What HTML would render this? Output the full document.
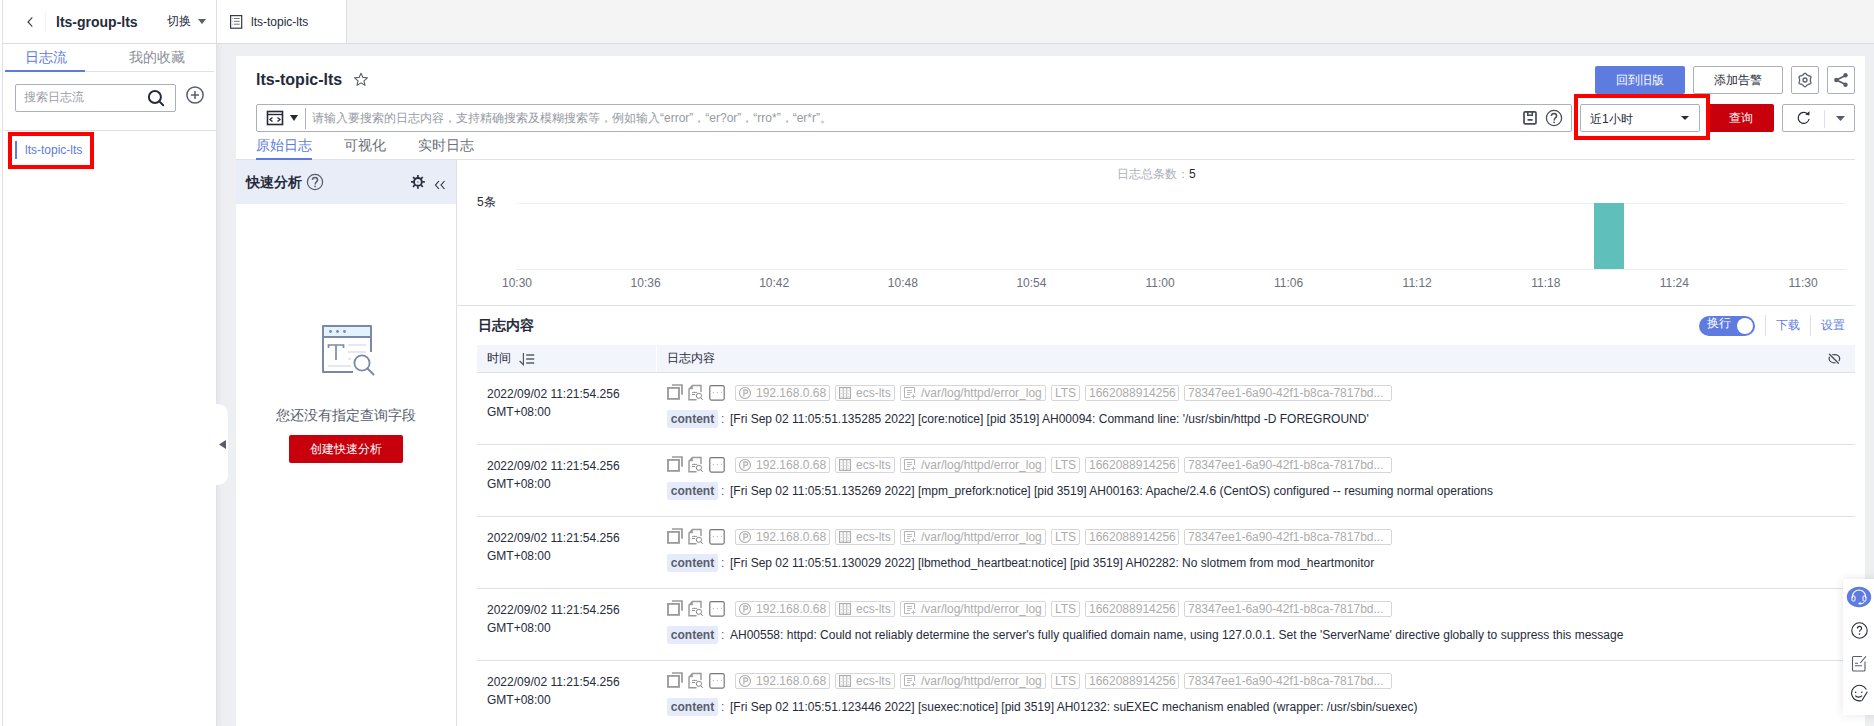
<!DOCTYPE html>
<html><head><meta charset="utf-8">
<style>
*{box-sizing:border-box;margin:0;padding:0}
html,body{width:1874px;height:726px;overflow:hidden;background:#fff;font-family:"Liberation Sans",sans-serif;color:#252b3a;font-size:12px}
.a{position:absolute}
.t{white-space:nowrap;line-height:1}
svg{display:block;overflow:visible}
.tag{height:16px;border:1px solid #d6d6d6;border-radius:2px;padding:0 3px;font-size:12px;line-height:14px;color:#acacac;white-space:nowrap;overflow:hidden}
</style></head><body>
<!-- top header -->
<div class="a" style="left:0;top:0;width:1874px;height:726px;background:#fff"></div>
<div class="a" style="left:346px;top:0;width:1528px;height:43px;background:#f4f4f4"></div>
<div class="a" style="left:2px;top:0;width:1px;height:726px;background:#dfe1e6"></div>
<div class="a" style="left:3px;top:43px;width:1871px;height:1px;background:#dcdde3"></div>
<div class="a" style="left:216px;top:0;width:1px;height:43px;background:#dcdde3"></div>
<div class="a" style="left:346px;top:0;width:1px;height:43px;background:#dcdde3"></div>
<div class="a" style="left:45px;top:11px;width:1px;height:21px;background:#f3f3f5"></div>
<!-- back chevron -->
<svg class="a" style="left:27px;top:16px" width="8" height="12" viewBox="0 0 8 12"><path d="M5.3 1.3 L1 6 L5.3 10.7" fill="none" stroke="#3a3f4c" stroke-width="1.15"/></svg>
<div class="a t" style="left:56px;top:15px;font-size:14px;font-weight:bold;color:#252b3a">lts-group-lts</div>
<div class="a t" style="left:167px;top:15px;font-size:12px;color:#252b3a">切换</div>
<svg class="a" style="left:198px;top:19px" width="8" height="5"><path d="M0 0H8L4 5Z" fill="#575d6c"/></svg>
<!-- tab -->
<svg class="a" style="left:228px;top:13px" width="16" height="18" viewBox="228 13 16 18"><rect x="230.6" y="15.6" width="11.1" height="12.6" fill="none" stroke="#353a47" stroke-width="1.2"/><path d="M234 18.5H239.7M234 21.3H239.7M234 24.2H239.7" stroke="#70757f" stroke-width="1"/><path d="M232.3 18.5H233.2M232.3 21.3H233.2M232.3 24.2H233.2" stroke="#a0a4ad" stroke-width="1"/></svg>
<div class="a t" style="left:251px;top:16px;font-size:12px;color:#252b3a">lts-topic-lts</div>

<!-- main grey bg -->
<div class="a" style="left:216px;top:44px;width:1658px;height:682px;background:#eeeff3"></div>
<div class="a" style="left:216px;top:44px;width:8px;height:682px;background:linear-gradient(to right,#dfe0e5,#e8e9ee 2px,#eeeff3 7px)"></div>

<!-- left sidebar -->
<div class="a t" style="left:25px;top:50px;font-size:14px;color:#5e7ce0">日志流</div>
<div class="a t" style="left:129px;top:50px;font-size:14px;color:#8a8e99">我的收藏</div>
<div class="a" style="left:5px;top:71px;width:209px;height:1px;background:#dfe1e6"></div>
<div class="a" style="left:5px;top:70px;width:80px;height:2px;background:#5e7ce0"></div>
<div class="a" style="left:15px;top:84px;width:161px;height:28px;border:1px solid #adb0b8;border-radius:2px"></div>
<div class="a t" style="left:24px;top:91px;font-size:12px;color:#9a9ea7">搜索日志流</div>
<svg class="a" style="left:146px;top:89px" width="20" height="20" viewBox="0 0 20 20"><circle cx="8.9" cy="8" r="6" fill="none" stroke="#252b3a" stroke-width="2"/><path d="M13.3 12.4L17.2 16.3" stroke="#252b3a" stroke-width="2" stroke-linecap="round"/></svg>
<svg class="a" style="left:186px;top:86px" width="18" height="18" viewBox="0 0 18 18"><circle cx="9" cy="9" r="8.1" fill="none" stroke="#575d6c" stroke-width="1.5"/><path d="M9 5V13M5 9H13" stroke="#575d6c" stroke-width="1.5"/></svg>
<div class="a" style="left:5px;top:130px;width:211px;height:1px;background:#dfe1e6"></div>
<div class="a" style="left:15px;top:141px;width:2px;height:18px;background:#5e7ce0"></div>
<div class="a t" style="left:25px;top:144px;font-size:12px;color:#5e7ce0">lts-topic-lts</div>
<div class="a" style="left:8px;top:132px;width:86px;height:37px;border:4px solid #ff0000"></div>

<!-- card -->
<div class="a" style="left:236px;top:56px;width:1629px;height:670px;background:#fff"></div>
<div class="a t" style="left:256px;top:72px;font-size:16px;font-weight:bold;color:#252b3a">lts-topic-lts</div>
<svg class="a" style="left:353px;top:72px" width="16" height="15" viewBox="0 0 16 15"><path d="M8 1.2L9.9 5.4L14.4 5.8L11 8.8L12 13.3L8 10.9L4 13.3L5 8.8L1.6 5.8L6.1 5.4Z" fill="none" stroke="#575d6c" stroke-width="1.1" stroke-linejoin="round"/></svg>
<!-- buttons -->
<div class="a t" style="left:1595px;top:66px;width:90px;height:28px;background:#5e7ce0;border-radius:2px;color:#fff;font-size:12px;line-height:28px;text-align:center">回到旧版</div>
<div class="a t" style="left:1693px;top:66px;width:90px;height:28px;border:1px solid #adb0b8;border-radius:2px;color:#252b3a;font-size:12px;line-height:26px;text-align:center">添加告警</div>
<div class="a" style="left:1791px;top:66px;width:28px;height:28px;border:1px solid #adb0b8;border-radius:2px"></div>
<svg class="a" style="left:1795px;top:70px" width="20" height="20" viewBox="1795 70 20 20"><path d="M1810.50 80.00L1810.49 80.24L1810.48 80.48L1810.45 80.72L1810.42 80.96L1810.37 81.19L1810.51 81.48L1810.68 81.79L1810.83 82.12L1810.92 82.45L1810.95 82.77L1810.91 83.08L1810.80 83.35L1810.62 83.58L1810.38 83.77L1810.08 83.90L1809.75 83.99L1809.39 84.03L1809.03 84.03L1808.72 84.06L1808.54 84.21L1808.35 84.36L1808.15 84.51L1807.96 84.64L1807.75 84.76L1807.54 84.88L1807.32 84.98L1807.10 85.08L1806.88 85.17L1806.65 85.25L1806.48 85.51L1806.29 85.82L1806.08 86.11L1805.84 86.35L1805.57 86.54L1805.29 86.66L1805.00 86.70L1804.71 86.66L1804.43 86.54L1804.16 86.35L1803.92 86.11L1803.71 85.82L1803.52 85.51L1803.35 85.25L1803.12 85.17L1802.90 85.08L1802.68 84.98L1802.46 84.88L1802.25 84.76L1802.04 84.64L1801.85 84.51L1801.65 84.36L1801.46 84.21L1801.28 84.06L1800.97 84.03L1800.61 84.03L1800.25 83.99L1799.92 83.90L1799.62 83.77L1799.38 83.58L1799.20 83.35L1799.09 83.08L1799.05 82.77L1799.08 82.45L1799.17 82.12L1799.32 81.79L1799.49 81.48L1799.63 81.19L1799.58 80.96L1799.55 80.72L1799.52 80.48L1799.51 80.24L1799.50 80.00L1799.51 79.76L1799.52 79.52L1799.55 79.28L1799.58 79.04L1799.63 78.81L1799.49 78.52L1799.32 78.21L1799.17 77.88L1799.08 77.55L1799.05 77.23L1799.09 76.92L1799.20 76.65L1799.38 76.42L1799.62 76.23L1799.92 76.10L1800.25 76.01L1800.61 75.97L1800.97 75.97L1801.28 75.94L1801.46 75.79L1801.65 75.64L1801.85 75.49L1802.04 75.36L1802.25 75.24L1802.46 75.12L1802.68 75.02L1802.90 74.92L1803.12 74.83L1803.35 74.75L1803.52 74.49L1803.71 74.18L1803.92 73.89L1804.16 73.65L1804.43 73.46L1804.71 73.34L1805.00 73.30L1805.29 73.34L1805.57 73.46L1805.84 73.65L1806.08 73.89L1806.29 74.18L1806.48 74.49L1806.65 74.75L1806.88 74.83L1807.10 74.92L1807.32 75.02L1807.54 75.12L1807.75 75.24L1807.96 75.36L1808.15 75.49L1808.35 75.64L1808.54 75.79L1808.72 75.94L1809.03 75.97L1809.39 75.97L1809.75 76.01L1810.08 76.10L1810.38 76.23L1810.62 76.42L1810.80 76.65L1810.91 76.92L1810.95 77.23L1810.92 77.55L1810.83 77.88L1810.68 78.21L1810.51 78.52L1810.37 78.81L1810.42 79.04L1810.45 79.28L1810.48 79.52L1810.49 79.76Z" fill="none" stroke="#575d6c" stroke-width="1.3" stroke-linejoin="round"/><circle cx="1805" cy="80" r="2" fill="none" stroke="#575d6c" stroke-width="1.3"/></svg>
<div class="a" style="left:1827px;top:66px;width:28px;height:28px;border:1px solid #adb0b8;border-radius:2px"></div>
<svg class="a" style="left:1833px;top:72px" width="16" height="16" viewBox="0 0 16 16"><path d="M12.5 3.5L3.5 8L12.5 12.5" fill="none" stroke="#575d6c" stroke-width="1.8"/><circle cx="12.5" cy="3.3" r="2.2" fill="#575d6c"/><circle cx="3.3" cy="8" r="2.2" fill="#575d6c"/><circle cx="12.5" cy="12.7" r="2.2" fill="#575d6c"/></svg>
<!-- search bar -->
<div class="a" style="left:256px;top:104px;width:1316px;height:28px;border:1px solid #adb0b8;border-radius:2px"></div>
<svg class="a" style="left:266px;top:110px" width="18" height="16" viewBox="0 0 18 16"><rect x="1.5" y="1.5" width="15" height="13" fill="none" stroke="#252b3a" stroke-width="1.6"/><path d="M1.5 4.5H16.5" stroke="#252b3a" stroke-width="1.4"/><path d="M6.5 7.5L4 9.5L6.5 11.5M11.5 7.5L14 9.5L11.5 11.5" fill="none" stroke="#252b3a" stroke-width="1.3"/></svg>
<svg class="a" style="left:290px;top:115px" width="8" height="6"><path d="M0 0H8L4 6Z" fill="#252b3a"/></svg>
<div class="a" style="left:305px;top:108px;width:1px;height:21px;background:#adb0b8"></div>
<div class="a t" style="left:312px;top:112px;font-size:12px;color:#959aa3">请输入要搜索的日志内容，支持精确搜索及模糊搜索等，例如输入“error”，“er?or”，“rro*”，“er*r”。</div>
<svg class="a" style="left:1515px;top:105px" width="55" height="26" viewBox="1515 105 55 26"><rect x="1524" y="111.9" width="12" height="12" rx="1.2" fill="none" stroke="#454b59" stroke-width="1.7"/><path d="M1527.8 112V115.2H1532.3V112M1527.6 119.9H1532.6" fill="none" stroke="#454b59" stroke-width="1.6"/>
<circle cx="1554" cy="118" r="7.6" fill="none" stroke="#454b59" stroke-width="1.25"/><path d="M1551.3 115.9C1551.5 114.3 1552.6 113.6 1554 113.6C1555.5 113.6 1556.6 114.6 1556.6 115.9C1556.6 117.6 1554.2 118.2 1554.2 120.4" fill="none" stroke="#454b59" stroke-width="1.5"/><circle cx="1554.1" cy="122.3" r=".9" fill="#454b59"/></svg>
<!-- time select -->
<div class="a" style="left:1580px;top:104px;width:120px;height:28px;border:1px solid #adb0b8;border-radius:2px"></div>
<div class="a t" style="left:1590px;top:113px;font-size:12px;color:#252b3a">近1小时</div>
<svg class="a" style="left:1681px;top:116px" width="8" height="4"><path d="M0 0H8L4 4Z" fill="#252b3a"/></svg>
<div class="a" style="left:1708px;top:104px;width:66px;height:28px;background:#c7000b;border-radius:2px;color:#fff;font-size:12px;line-height:28px;text-align:center">查询</div>
<div class="a" style="left:1574px;top:94px;width:136px;height:46px;border:4px solid #ff0000"></div>
<div class="a" style="left:1782px;top:104px;width:73px;height:28px;border:1px solid #adb0b8;border-radius:2px"></div>
<svg class="a" style="left:1795px;top:109px" width="18" height="18" viewBox="1795 109 18 18"><path d="M1807.6 114A5.5 5.5 0 1 0 1809.1 119" fill="none" stroke="#252b3a" stroke-width="1.2"/><path d="M1809.6 111.3L1809.3 115.6L1805.2 114.6Z" fill="#252b3a"/></svg>
<div class="a" style="left:1824px;top:110px;width:1px;height:18px;background:#dfe1e6"></div>
<svg class="a" style="left:1836px;top:116px" width="9" height="5"><path d="M0 0H9L4.5 5Z" fill="#575d6c"/></svg>
<!-- tabs -->
<div class="a t" style="left:256px;top:138px;font-size:14px;color:#5e7ce0">原始日志</div>
<div class="a t" style="left:344px;top:138px;font-size:14px;color:#6c707a">可视化</div>
<div class="a t" style="left:418px;top:138px;font-size:14px;color:#6c707a">实时日志</div>
<div class="a" style="left:236px;top:159px;width:1619px;height:1px;background:#dfe1e6"></div>
<div class="a" style="left:256px;top:158px;width:56px;height:2px;background:#5e7ce0"></div>
<!-- quick analysis -->
<div class="a" style="left:236px;top:160px;width:220px;height:44px;background:#e9edf8"></div>
<div class="a" style="left:456px;top:160px;width:1px;height:566px;background:#dfe1e6"></div>
<div class="a t" style="left:246px;top:175px;font-size:14px;font-weight:bold;color:#252b3a">快速分析</div>
<svg class="a" style="left:305px;top:172px" width="20" height="20" viewBox="305 172 20 20"><circle cx="315" cy="182" r="7.6" fill="none" stroke="#575d6c" stroke-width="1.25"/><path d="M312.3 179.9C312.5 178.3 313.6 177.6 315 177.6C316.5 177.6 317.6 178.6 317.6 179.9C317.6 181.6 315.2 182.2 315.2 184.4" fill="none" stroke="#575d6c" stroke-width="1.5"/><circle cx="315.1" cy="186.3" r=".9" fill="#575d6c"/></svg>
<svg class="a" style="left:408px;top:172px" width="20" height="20" viewBox="408 172 20 20"><circle cx="417.9" cy="181.9" r="3.9" fill="none" stroke="#252b3a" stroke-width="1.9"/><path d="M417.90 177.30L417.90 175.00M421.15 178.65L422.78 177.02M422.50 181.90L424.80 181.90M421.15 185.15L422.78 186.78M417.90 186.50L417.90 188.80M414.65 185.15L413.02 186.78M413.30 181.90L411.00 181.90M414.65 178.65L413.02 177.02" stroke="#252b3a" stroke-width="1.7"/><circle cx="417.9" cy="181.9" r=".7" fill="#575d6c"/></svg>
<svg class="a" style="left:434px;top:180px" width="12" height="10" viewBox="0 0 12 10"><path d="M5 1L1.5 5L5 9M10.5 1L7 5L10.5 9" fill="none" stroke="#252b3a" stroke-width="1.1"/></svg>
<!-- empty illustration -->
<svg class="a" style="left:318px;top:320px" width="60" height="60" viewBox="318 320 60 60">
<rect x="323" y="326" width="48" height="11" fill="#e3f2fd"/>
<path d="M353 372H323V326H371V352" fill="none" stroke="#7a8aa6" stroke-width="2" stroke-linejoin="round"/>
<path d="M323 337H371" stroke="#7a8aa6" stroke-width="1.8"/>
<circle cx="330.5" cy="331.5" r="1.4" fill="#7a8aa6"/><circle cx="337.5" cy="331.5" r="1.4" fill="#7a8aa6"/><circle cx="344.5" cy="331.5" r="1.4" fill="#7a8aa6"/>
<path d="M328.5 348V345H343.5V348M336 345V360" fill="none" stroke="#7a8aa6" stroke-width="1.7"/>
<path d="M348 345H366M348 352H366M348 359H351M328 366H351" stroke="#dfe1e6" stroke-width="1.6"/>
<circle cx="362" cy="363" r="7.6" fill="#fff" stroke="#7a8aa6" stroke-width="1.8"/>
<path d="M367.5 368.5L373.5 374.5" stroke="#7a8aa6" stroke-width="2" stroke-linecap="round"/>
</svg>
<div class="a t" style="left:276px;top:408px;font-size:14px;color:#575d6c">您还没有指定查询字段</div>
<div class="a t" style="left:289px;top:435px;width:114px;height:28px;background:#c7000b;border-radius:2px;color:#fff;font-size:12px;line-height:28px;text-align:center">创建快速分析</div>
<!-- collapse handle -->
<div class="a" style="left:216px;top:404px;width:12px;height:81px;background:#fff;border-radius:0 10px 10px 0"></div>
<svg class="a" style="left:219px;top:440px" width="7" height="9"><path d="M7 0V9L0 4.5Z" fill="#575d6c"/></svg>
<!-- chart -->
<div class="a t" style="left:1117px;top:168px;font-size:12px;color:#adb0b8">日志总条数：<span style="color:#252b3a">5</span></div>
<div class="a t" style="left:477px;top:196px;font-size:12px;color:#252b3a">5条</div>
<div class="a" style="left:516px;top:203px;width:1330px;height:1px;background:#f0f0f0"></div>
<div class="a" style="left:516px;top:269px;width:1330px;height:1px;background:#ededed"></div>
<div class="a" style="left:1594px;top:203px;width:30px;height:66px;background:#5ebfbb"></div>
<div class="a t" style="left:477.0px;top:277px;width:80px;text-align:center;font-size:12px;color:#6c707a">10:30</div>
<div class="a t" style="left:605.6px;top:277px;width:80px;text-align:center;font-size:12px;color:#6c707a">10:36</div>
<div class="a t" style="left:734.2px;top:277px;width:80px;text-align:center;font-size:12px;color:#6c707a">10:42</div>
<div class="a t" style="left:862.8px;top:277px;width:80px;text-align:center;font-size:12px;color:#6c707a">10:48</div>
<div class="a t" style="left:991.4px;top:277px;width:80px;text-align:center;font-size:12px;color:#6c707a">10:54</div>
<div class="a t" style="left:1120.0px;top:277px;width:80px;text-align:center;font-size:12px;color:#6c707a">11:00</div>
<div class="a t" style="left:1248.6px;top:277px;width:80px;text-align:center;font-size:12px;color:#6c707a">11:06</div>
<div class="a t" style="left:1377.2px;top:277px;width:80px;text-align:center;font-size:12px;color:#6c707a">11:12</div>
<div class="a t" style="left:1505.8px;top:277px;width:80px;text-align:center;font-size:12px;color:#6c707a">11:18</div>
<div class="a t" style="left:1634.4px;top:277px;width:80px;text-align:center;font-size:12px;color:#6c707a">11:24</div>
<div class="a t" style="left:1763.0px;top:277px;width:80px;text-align:center;font-size:12px;color:#6c707a">11:30</div>

<div class="a" style="left:457px;top:305px;width:1398px;height:1px;background:#dfe1e6"></div>
<!-- log content -->
<div class="a t" style="left:478px;top:318px;font-size:14px;font-weight:bold;color:#252b3a">日志内容</div>
<div class="a" style="left:1699px;top:316px;width:56px;height:20px;background:#5e7ce0;border-radius:10px"></div>
<div class="a t" style="left:1707px;top:317px;font-size:12px;color:#fff">换行</div>
<div class="a" style="left:1737px;top:318px;width:16px;height:16px;background:#fff;border-radius:50%"></div>
<div class="a" style="left:1765px;top:315px;width:1px;height:21px;background:#dfe1e6"></div>
<div class="a t" style="left:1776px;top:319px;font-size:12px;color:#5e7ce0">下载</div>
<div class="a" style="left:1810px;top:315px;width:1px;height:21px;background:#dfe1e6"></div>
<div class="a t" style="left:1821px;top:319px;font-size:12px;color:#5e7ce0">设置</div>
<div class="a" style="left:477px;top:345px;width:1378px;height:27px;background:#f2f5fc"></div>
<div class="a" style="left:656px;top:345px;width:1px;height:27px;background:#fff"></div>
<div class="a" style="left:477px;top:372px;width:1378px;height:1px;background:#dfe1e6"></div>
<div class="a t" style="left:487px;top:352px;font-size:12px;color:#252b3a">时间</div>
<svg class="a" style="left:516px;top:350px" width="22" height="18" viewBox="516 350 22 18"><path d="M523.4 353V364.6L519.6 361" fill="none" stroke="#454b59" stroke-width="1.1"/><path d="M526.2 355H534.2M526.2 359H534.2M526.2 363H534.2" stroke="#575d6c" stroke-width="1.4"/></svg>
<div class="a t" style="left:667px;top:352px;font-size:12px;color:#252b3a">日志内容</div>
<svg class="a" style="left:1825px;top:350px" width="20" height="18" viewBox="1825 350 20 18"><ellipse cx="1834.4" cy="358.7" rx="5.3" ry="4.1" fill="none" stroke="#454b59" stroke-width="1.3"/><path d="M1829.3 354.1L1838.6 363.4" stroke="#f2f5fc" stroke-width="3.2"/><path d="M1829.5 354.3L1838.4 363.2" stroke="#454b59" stroke-width="1.3" stroke-linecap="round"/></svg>
<div class="a t" style="left:487px;top:385px;font-size:12px;line-height:18px;color:#252b3a">2022/09/02 11:21:54.256<br>GMT+08:00</div>
<svg class="a" style="left:664px;top:380px" width="66" height="24" viewBox="664 380 66 24">
<rect x="668" y="387.9" width="11" height="11" fill="none" stroke="#999" stroke-width="1.8"/><path d="M672 385H682V394.8" fill="none" stroke="#999" stroke-width="1.7"/>
<path d="M696.5 399.8H689V389L692.5 385.5H701V392" fill="none" stroke="#999" stroke-width="1.4"/><path d="M689 389.3H692.8V385.5Z" fill="#999"/><path d="M692 392.4H697M692 394.5H695" stroke="#888" stroke-width=".9"/><circle cx="698.9" cy="395.8" r="2.6" fill="none" stroke="#888" stroke-width="1"/><path d="M700.7 397.7L702.8 400" stroke="#888" stroke-width="1"/>
<rect x="709.8" y="385.7" width="14.4" height="14.4" rx="1.5" fill="none" stroke="#777" stroke-width="1.2"/><path d="M712.8 392.4H714M716.8 392.4H718M720.8 392.4H722" stroke="#aaa" stroke-width=".8"/>
</svg>
<div class="a tag" style="left:735px;top:385px;width:95px"><svg width="12" height="12" viewBox="0 0 12 12" style="display:inline-block;vertical-align:-2px;margin-right:5px"><circle cx="6" cy="6" r="5.5" fill="none" stroke="#aaa" stroke-width="1.1"/><path d="M4.9 9.3V3H6.9C8.1 3 8.7 3.7 8.7 4.7S8.1 6.4 6.9 6.4H4.9" fill="none" stroke="#b5b5b5" stroke-width="1.3"/></svg>192.168.0.68</div>
<div class="a tag" style="left:835px;top:385px;width:60px"><svg width="12" height="12" viewBox="0 0 12 12" style="display:inline-block;vertical-align:-2px;margin-right:5px"><rect x=".6" y=".6" width="10.8" height="10.8" fill="none" stroke="#a8a8a8" stroke-width="1.1"/><path d="M4.2 .5V11.5M7.8 .5V11.5" stroke="#a8a8a8" stroke-width=".9"/><path d="M2.4 3V4.2M2.4 6V7.2M2.4 9V10M6 3V4.2M6 6V7.2M6 9V10M9.6 3V4.2M9.6 6V7.2M9.6 9V10" stroke="#c8c8c8" stroke-width=".8"/></svg>ecs-lts</div>
<div class="a tag" style="left:900px;top:385px;width:146px"><svg width="12" height="12" viewBox="0 0 12 12" style="display:inline-block;vertical-align:-2px;margin-right:5px"><path d="M6 10.5H.5V.5H10.5V6" fill="none" stroke="#b2b5bc"/><path d="M3 3.5H8M3 5.5H8M3 7.5H6M7.5 9.5H11.5M9.5 7.5V11.5" stroke="#b2b5bc" stroke-width=".9"/></svg>/var/log/httpd/error_log</div>
<div class="a tag" style="left:1051px;top:385px;width:29px">LTS</div>
<div class="a tag" style="left:1085px;top:385px;width:94px">1662088914256</div>
<div class="a tag" style="left:1184px;top:385px;width:208px">78347ee1-6a90-42f1-b8ca-7817bd...</div>
<div class="a t" style="left:667px;top:410px;width:51px;height:18px;background:#e6ebfb;border-radius:2px;font-size:12px;line-height:18px;font-weight:bold;color:#575d6c;text-align:center">content</div>
<div class="a t" style="left:721px;top:413px;font-size:12px;color:#575d6c">:</div>
<div class="a t" style="left:730px;top:413px;font-size:12px;color:#252b3a">[Fri Sep 02 11:05:51.135285 2022] [core:notice] [pid 3519] AH00094: Command line: &#39;/usr/sbin/httpd -D FOREGROUND&#39;</div>
<div class="a" style="left:477px;top:444px;width:1378px;height:1px;background:#dfe1e6"></div>
<div class="a t" style="left:487px;top:457px;font-size:12px;line-height:18px;color:#252b3a">2022/09/02 11:21:54.256<br>GMT+08:00</div>
<svg class="a" style="left:664px;top:452px" width="66" height="24" viewBox="664 380 66 24">
<rect x="668" y="387.9" width="11" height="11" fill="none" stroke="#999" stroke-width="1.8"/><path d="M672 385H682V394.8" fill="none" stroke="#999" stroke-width="1.7"/>
<path d="M696.5 399.8H689V389L692.5 385.5H701V392" fill="none" stroke="#999" stroke-width="1.4"/><path d="M689 389.3H692.8V385.5Z" fill="#999"/><path d="M692 392.4H697M692 394.5H695" stroke="#888" stroke-width=".9"/><circle cx="698.9" cy="395.8" r="2.6" fill="none" stroke="#888" stroke-width="1"/><path d="M700.7 397.7L702.8 400" stroke="#888" stroke-width="1"/>
<rect x="709.8" y="385.7" width="14.4" height="14.4" rx="1.5" fill="none" stroke="#777" stroke-width="1.2"/><path d="M712.8 392.4H714M716.8 392.4H718M720.8 392.4H722" stroke="#aaa" stroke-width=".8"/>
</svg>
<div class="a tag" style="left:735px;top:457px;width:95px"><svg width="12" height="12" viewBox="0 0 12 12" style="display:inline-block;vertical-align:-2px;margin-right:5px"><circle cx="6" cy="6" r="5.5" fill="none" stroke="#aaa" stroke-width="1.1"/><path d="M4.9 9.3V3H6.9C8.1 3 8.7 3.7 8.7 4.7S8.1 6.4 6.9 6.4H4.9" fill="none" stroke="#b5b5b5" stroke-width="1.3"/></svg>192.168.0.68</div>
<div class="a tag" style="left:835px;top:457px;width:60px"><svg width="12" height="12" viewBox="0 0 12 12" style="display:inline-block;vertical-align:-2px;margin-right:5px"><rect x=".6" y=".6" width="10.8" height="10.8" fill="none" stroke="#a8a8a8" stroke-width="1.1"/><path d="M4.2 .5V11.5M7.8 .5V11.5" stroke="#a8a8a8" stroke-width=".9"/><path d="M2.4 3V4.2M2.4 6V7.2M2.4 9V10M6 3V4.2M6 6V7.2M6 9V10M9.6 3V4.2M9.6 6V7.2M9.6 9V10" stroke="#c8c8c8" stroke-width=".8"/></svg>ecs-lts</div>
<div class="a tag" style="left:900px;top:457px;width:146px"><svg width="12" height="12" viewBox="0 0 12 12" style="display:inline-block;vertical-align:-2px;margin-right:5px"><path d="M6 10.5H.5V.5H10.5V6" fill="none" stroke="#b2b5bc"/><path d="M3 3.5H8M3 5.5H8M3 7.5H6M7.5 9.5H11.5M9.5 7.5V11.5" stroke="#b2b5bc" stroke-width=".9"/></svg>/var/log/httpd/error_log</div>
<div class="a tag" style="left:1051px;top:457px;width:29px">LTS</div>
<div class="a tag" style="left:1085px;top:457px;width:94px">1662088914256</div>
<div class="a tag" style="left:1184px;top:457px;width:208px">78347ee1-6a90-42f1-b8ca-7817bd...</div>
<div class="a t" style="left:667px;top:482px;width:51px;height:18px;background:#e6ebfb;border-radius:2px;font-size:12px;line-height:18px;font-weight:bold;color:#575d6c;text-align:center">content</div>
<div class="a t" style="left:721px;top:485px;font-size:12px;color:#575d6c">:</div>
<div class="a t" style="left:730px;top:485px;font-size:12px;color:#252b3a">[Fri Sep 02 11:05:51.135269 2022] [mpm_prefork:notice] [pid 3519] AH00163: Apache/2.4.6 (CentOS) configured -- resuming normal operations</div>
<div class="a" style="left:477px;top:516px;width:1378px;height:1px;background:#dfe1e6"></div>
<div class="a t" style="left:487px;top:529px;font-size:12px;line-height:18px;color:#252b3a">2022/09/02 11:21:54.256<br>GMT+08:00</div>
<svg class="a" style="left:664px;top:524px" width="66" height="24" viewBox="664 380 66 24">
<rect x="668" y="387.9" width="11" height="11" fill="none" stroke="#999" stroke-width="1.8"/><path d="M672 385H682V394.8" fill="none" stroke="#999" stroke-width="1.7"/>
<path d="M696.5 399.8H689V389L692.5 385.5H701V392" fill="none" stroke="#999" stroke-width="1.4"/><path d="M689 389.3H692.8V385.5Z" fill="#999"/><path d="M692 392.4H697M692 394.5H695" stroke="#888" stroke-width=".9"/><circle cx="698.9" cy="395.8" r="2.6" fill="none" stroke="#888" stroke-width="1"/><path d="M700.7 397.7L702.8 400" stroke="#888" stroke-width="1"/>
<rect x="709.8" y="385.7" width="14.4" height="14.4" rx="1.5" fill="none" stroke="#777" stroke-width="1.2"/><path d="M712.8 392.4H714M716.8 392.4H718M720.8 392.4H722" stroke="#aaa" stroke-width=".8"/>
</svg>
<div class="a tag" style="left:735px;top:529px;width:95px"><svg width="12" height="12" viewBox="0 0 12 12" style="display:inline-block;vertical-align:-2px;margin-right:5px"><circle cx="6" cy="6" r="5.5" fill="none" stroke="#aaa" stroke-width="1.1"/><path d="M4.9 9.3V3H6.9C8.1 3 8.7 3.7 8.7 4.7S8.1 6.4 6.9 6.4H4.9" fill="none" stroke="#b5b5b5" stroke-width="1.3"/></svg>192.168.0.68</div>
<div class="a tag" style="left:835px;top:529px;width:60px"><svg width="12" height="12" viewBox="0 0 12 12" style="display:inline-block;vertical-align:-2px;margin-right:5px"><rect x=".6" y=".6" width="10.8" height="10.8" fill="none" stroke="#a8a8a8" stroke-width="1.1"/><path d="M4.2 .5V11.5M7.8 .5V11.5" stroke="#a8a8a8" stroke-width=".9"/><path d="M2.4 3V4.2M2.4 6V7.2M2.4 9V10M6 3V4.2M6 6V7.2M6 9V10M9.6 3V4.2M9.6 6V7.2M9.6 9V10" stroke="#c8c8c8" stroke-width=".8"/></svg>ecs-lts</div>
<div class="a tag" style="left:900px;top:529px;width:146px"><svg width="12" height="12" viewBox="0 0 12 12" style="display:inline-block;vertical-align:-2px;margin-right:5px"><path d="M6 10.5H.5V.5H10.5V6" fill="none" stroke="#b2b5bc"/><path d="M3 3.5H8M3 5.5H8M3 7.5H6M7.5 9.5H11.5M9.5 7.5V11.5" stroke="#b2b5bc" stroke-width=".9"/></svg>/var/log/httpd/error_log</div>
<div class="a tag" style="left:1051px;top:529px;width:29px">LTS</div>
<div class="a tag" style="left:1085px;top:529px;width:94px">1662088914256</div>
<div class="a tag" style="left:1184px;top:529px;width:208px">78347ee1-6a90-42f1-b8ca-7817bd...</div>
<div class="a t" style="left:667px;top:554px;width:51px;height:18px;background:#e6ebfb;border-radius:2px;font-size:12px;line-height:18px;font-weight:bold;color:#575d6c;text-align:center">content</div>
<div class="a t" style="left:721px;top:557px;font-size:12px;color:#575d6c">:</div>
<div class="a t" style="left:730px;top:557px;font-size:12px;color:#252b3a">[Fri Sep 02 11:05:51.130029 2022] [lbmethod_heartbeat:notice] [pid 3519] AH02282: No slotmem from mod_heartmonitor</div>
<div class="a" style="left:477px;top:588px;width:1378px;height:1px;background:#dfe1e6"></div>
<div class="a t" style="left:487px;top:601px;font-size:12px;line-height:18px;color:#252b3a">2022/09/02 11:21:54.256<br>GMT+08:00</div>
<svg class="a" style="left:664px;top:596px" width="66" height="24" viewBox="664 380 66 24">
<rect x="668" y="387.9" width="11" height="11" fill="none" stroke="#999" stroke-width="1.8"/><path d="M672 385H682V394.8" fill="none" stroke="#999" stroke-width="1.7"/>
<path d="M696.5 399.8H689V389L692.5 385.5H701V392" fill="none" stroke="#999" stroke-width="1.4"/><path d="M689 389.3H692.8V385.5Z" fill="#999"/><path d="M692 392.4H697M692 394.5H695" stroke="#888" stroke-width=".9"/><circle cx="698.9" cy="395.8" r="2.6" fill="none" stroke="#888" stroke-width="1"/><path d="M700.7 397.7L702.8 400" stroke="#888" stroke-width="1"/>
<rect x="709.8" y="385.7" width="14.4" height="14.4" rx="1.5" fill="none" stroke="#777" stroke-width="1.2"/><path d="M712.8 392.4H714M716.8 392.4H718M720.8 392.4H722" stroke="#aaa" stroke-width=".8"/>
</svg>
<div class="a tag" style="left:735px;top:601px;width:95px"><svg width="12" height="12" viewBox="0 0 12 12" style="display:inline-block;vertical-align:-2px;margin-right:5px"><circle cx="6" cy="6" r="5.5" fill="none" stroke="#aaa" stroke-width="1.1"/><path d="M4.9 9.3V3H6.9C8.1 3 8.7 3.7 8.7 4.7S8.1 6.4 6.9 6.4H4.9" fill="none" stroke="#b5b5b5" stroke-width="1.3"/></svg>192.168.0.68</div>
<div class="a tag" style="left:835px;top:601px;width:60px"><svg width="12" height="12" viewBox="0 0 12 12" style="display:inline-block;vertical-align:-2px;margin-right:5px"><rect x=".6" y=".6" width="10.8" height="10.8" fill="none" stroke="#a8a8a8" stroke-width="1.1"/><path d="M4.2 .5V11.5M7.8 .5V11.5" stroke="#a8a8a8" stroke-width=".9"/><path d="M2.4 3V4.2M2.4 6V7.2M2.4 9V10M6 3V4.2M6 6V7.2M6 9V10M9.6 3V4.2M9.6 6V7.2M9.6 9V10" stroke="#c8c8c8" stroke-width=".8"/></svg>ecs-lts</div>
<div class="a tag" style="left:900px;top:601px;width:146px"><svg width="12" height="12" viewBox="0 0 12 12" style="display:inline-block;vertical-align:-2px;margin-right:5px"><path d="M6 10.5H.5V.5H10.5V6" fill="none" stroke="#b2b5bc"/><path d="M3 3.5H8M3 5.5H8M3 7.5H6M7.5 9.5H11.5M9.5 7.5V11.5" stroke="#b2b5bc" stroke-width=".9"/></svg>/var/log/httpd/error_log</div>
<div class="a tag" style="left:1051px;top:601px;width:29px">LTS</div>
<div class="a tag" style="left:1085px;top:601px;width:94px">1662088914256</div>
<div class="a tag" style="left:1184px;top:601px;width:208px">78347ee1-6a90-42f1-b8ca-7817bd...</div>
<div class="a t" style="left:667px;top:626px;width:51px;height:18px;background:#e6ebfb;border-radius:2px;font-size:12px;line-height:18px;font-weight:bold;color:#575d6c;text-align:center">content</div>
<div class="a t" style="left:721px;top:629px;font-size:12px;color:#575d6c">:</div>
<div class="a t" style="left:730px;top:629px;font-size:12px;color:#252b3a">AH00558: httpd: Could not reliably determine the server&#39;s fully qualified domain name, using 127.0.0.1. Set the &#39;ServerName&#39; directive globally to suppress this message</div>
<div class="a" style="left:477px;top:660px;width:1378px;height:1px;background:#dfe1e6"></div>
<div class="a t" style="left:487px;top:673px;font-size:12px;line-height:18px;color:#252b3a">2022/09/02 11:21:54.256<br>GMT+08:00</div>
<svg class="a" style="left:664px;top:668px" width="66" height="24" viewBox="664 380 66 24">
<rect x="668" y="387.9" width="11" height="11" fill="none" stroke="#999" stroke-width="1.8"/><path d="M672 385H682V394.8" fill="none" stroke="#999" stroke-width="1.7"/>
<path d="M696.5 399.8H689V389L692.5 385.5H701V392" fill="none" stroke="#999" stroke-width="1.4"/><path d="M689 389.3H692.8V385.5Z" fill="#999"/><path d="M692 392.4H697M692 394.5H695" stroke="#888" stroke-width=".9"/><circle cx="698.9" cy="395.8" r="2.6" fill="none" stroke="#888" stroke-width="1"/><path d="M700.7 397.7L702.8 400" stroke="#888" stroke-width="1"/>
<rect x="709.8" y="385.7" width="14.4" height="14.4" rx="1.5" fill="none" stroke="#777" stroke-width="1.2"/><path d="M712.8 392.4H714M716.8 392.4H718M720.8 392.4H722" stroke="#aaa" stroke-width=".8"/>
</svg>
<div class="a tag" style="left:735px;top:673px;width:95px"><svg width="12" height="12" viewBox="0 0 12 12" style="display:inline-block;vertical-align:-2px;margin-right:5px"><circle cx="6" cy="6" r="5.5" fill="none" stroke="#aaa" stroke-width="1.1"/><path d="M4.9 9.3V3H6.9C8.1 3 8.7 3.7 8.7 4.7S8.1 6.4 6.9 6.4H4.9" fill="none" stroke="#b5b5b5" stroke-width="1.3"/></svg>192.168.0.68</div>
<div class="a tag" style="left:835px;top:673px;width:60px"><svg width="12" height="12" viewBox="0 0 12 12" style="display:inline-block;vertical-align:-2px;margin-right:5px"><rect x=".6" y=".6" width="10.8" height="10.8" fill="none" stroke="#a8a8a8" stroke-width="1.1"/><path d="M4.2 .5V11.5M7.8 .5V11.5" stroke="#a8a8a8" stroke-width=".9"/><path d="M2.4 3V4.2M2.4 6V7.2M2.4 9V10M6 3V4.2M6 6V7.2M6 9V10M9.6 3V4.2M9.6 6V7.2M9.6 9V10" stroke="#c8c8c8" stroke-width=".8"/></svg>ecs-lts</div>
<div class="a tag" style="left:900px;top:673px;width:146px"><svg width="12" height="12" viewBox="0 0 12 12" style="display:inline-block;vertical-align:-2px;margin-right:5px"><path d="M6 10.5H.5V.5H10.5V6" fill="none" stroke="#b2b5bc"/><path d="M3 3.5H8M3 5.5H8M3 7.5H6M7.5 9.5H11.5M9.5 7.5V11.5" stroke="#b2b5bc" stroke-width=".9"/></svg>/var/log/httpd/error_log</div>
<div class="a tag" style="left:1051px;top:673px;width:29px">LTS</div>
<div class="a tag" style="left:1085px;top:673px;width:94px">1662088914256</div>
<div class="a tag" style="left:1184px;top:673px;width:208px">78347ee1-6a90-42f1-b8ca-7817bd...</div>
<div class="a t" style="left:667px;top:698px;width:51px;height:18px;background:#e6ebfb;border-radius:2px;font-size:12px;line-height:18px;font-weight:bold;color:#575d6c;text-align:center">content</div>
<div class="a t" style="left:721px;top:701px;font-size:12px;color:#575d6c">:</div>
<div class="a t" style="left:730px;top:701px;font-size:12px;color:#252b3a">[Fri Sep 02 11:05:51.123446 2022] [suexec:notice] [pid 3519] AH01232: suEXEC mechanism enabled (wrapper: /usr/sbin/suexec)</div>


<!-- floating toolbar -->
<div class="a" style="left:1843px;top:579px;width:40px;height:136px;background:#fff;box-shadow:0 0 10px rgba(0,0,0,.1)"></div>
<svg class="a" style="left:1846px;top:586px" width="26" height="22" viewBox="1846 586 26 22"><ellipse cx="1859" cy="597" rx="12.2" ry="10.3" fill="#5e7ce0"/><path d="M1852.5 598V596.5A6.5 6.5 0 0 1 1865.5 596.5V598" fill="none" stroke="#fff" stroke-width="1.1"/><rect x="1852" y="596" width="3" height="5" rx=".8" fill="none" stroke="#fff" stroke-width="1"/><rect x="1863" y="596" width="3" height="5" rx=".8" fill="none" stroke="#fff" stroke-width="1"/><path d="M1864.5 601.5C1864 603 1862.5 603.5 1861 603.5" fill="none" stroke="#fff" stroke-width="1"/><ellipse cx="1860" cy="603.6" rx="1.8" ry="1" fill="#fff"/></svg>
<svg class="a" style="left:1850.5px;top:621.6px" width="17" height="17" viewBox="0 0 17 17"><circle cx="8.5" cy="8.5" r="7.7" fill="none" stroke="#252b3a" stroke-width="1.1"/><path d="M6.4 6.6C6.4 5.2 7.3 4.4 8.5 4.4C9.7 4.4 10.6 5.2 10.6 6.4C10.6 7.8 8.5 8 8.5 9.8" fill="none" stroke="#252b3a" stroke-width="1.1"/><circle cx="8.5" cy="12.1" r=".8" fill="#252b3a"/></svg>
<svg class="a" style="left:1846px;top:650px" width="26" height="56" viewBox="1846 650 26 56"><path d="M1862 656.5H1853.5A1 1 0 0 0 1852.5 657.5V670A1 1 0 0 0 1853.5 671H1864A1 1 0 0 0 1865 670V661.5" fill="none" stroke="#575d6c" stroke-width="1.1"/><path d="M1855 663.3H1858M1855 665.7H1862M1860.2 663L1866 656.3" stroke="#575d6c" stroke-width="1.1"/>
<path d="M1866.3 689.5A7.8 7.8 0 1 0 1861.5 700.6" fill="none" stroke="#252b3a" stroke-width="1.1"/><path d="M1867.3 691.7L1861.8 700.8" stroke="#252b3a" stroke-width="1.1"/><circle cx="1855.6" cy="692.3" r=".75" fill="#252b3a"/><circle cx="1861.8" cy="692.3" r=".75" fill="#252b3a"/><path d="M1855.3 695.6C1856.5 697.6 1860.7 697.6 1862 695.6" fill="none" stroke="#252b3a" stroke-width="1.1"/></svg>
</body></html>
